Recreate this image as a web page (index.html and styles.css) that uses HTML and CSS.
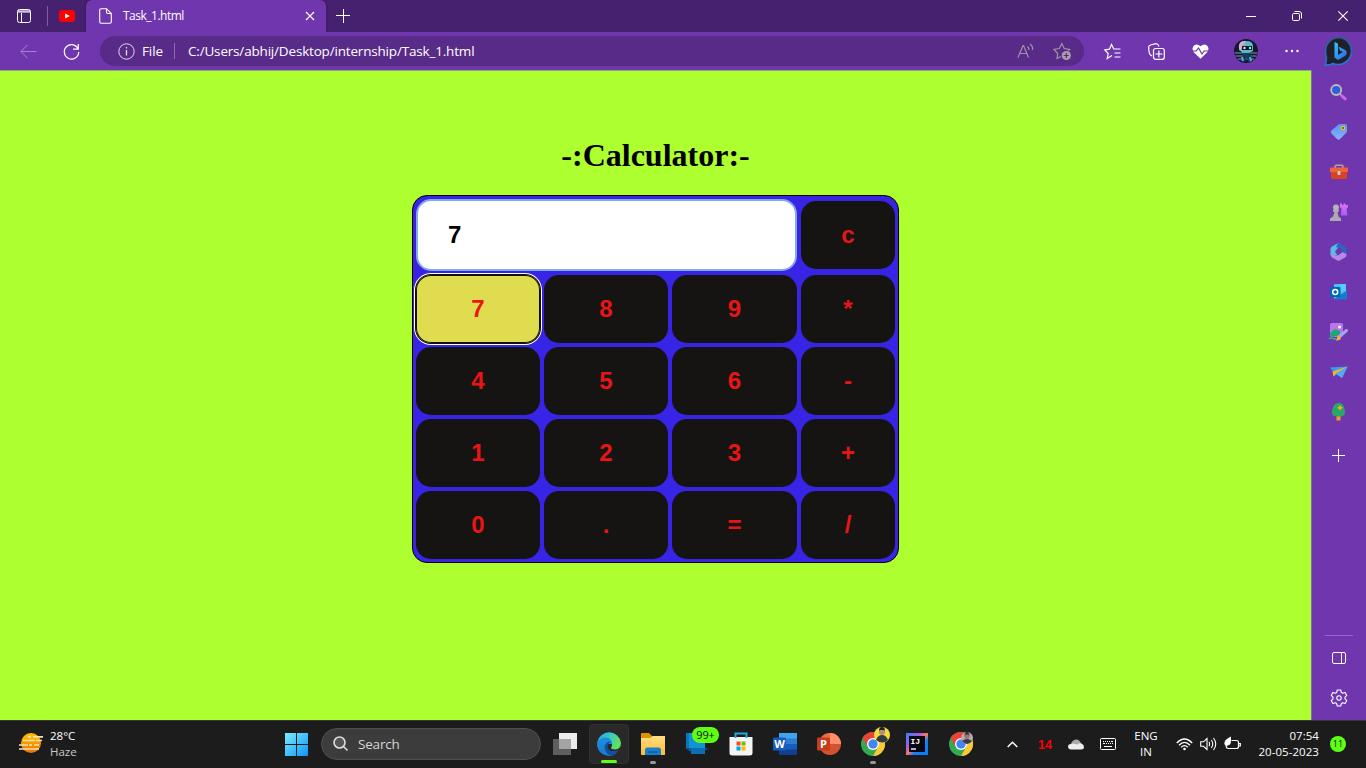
FILE: index.html
```html
<!DOCTYPE html>
<html lang="en">
<head>
<meta charset="utf-8">
<title>Task_1.html</title>
<link rel="stylesheet" href="styles.css">
</head>
<body>
<svg class="defs" width="0" height="0">
  <defs>
    <linearGradient id="sun" x1="0" y1="0" x2="0" y2="1"><stop offset="0" stop-color="#ffc400"/><stop offset="1" stop-color="#f07000"/></linearGradient>
    <linearGradient id="win" x1="0" y1="0" x2="1" y2="1"><stop offset="0" stop-color="#7cecff"/><stop offset="1" stop-color="#0a96f5"/></linearGradient>
    <linearGradient id="edgeTop" x1="0" y1="0" x2="1" y2="0.3"><stop offset="0" stop-color="#2aa5e0"/><stop offset=".5" stop-color="#35c5cf"/><stop offset="1" stop-color="#62e05c"/></linearGradient>
    <linearGradient id="edgeLow" x1="0" y1="0" x2="0" y2="1"><stop offset="0" stop-color="#1b8fe0"/><stop offset="1" stop-color="#1b7ad0"/></linearGradient>
    <linearGradient id="folder" x1="0" y1="0" x2="0" y2="1"><stop offset="0" stop-color="#ffe083"/><stop offset="1" stop-color="#ffb92e"/></linearGradient>
    <linearGradient id="bing" x1="0" y1="0" x2="1" y2="1"><stop offset="0" stop-color="#35c8f5"/><stop offset="1" stop-color="#2563ec"/></linearGradient>
    <linearGradient id="bingEdge" x1="0" y1="0" x2="0" y2="1"><stop offset="0" stop-color="#2a5f8c"/><stop offset="1" stop-color="#2277e0"/></linearGradient>
    <linearGradient id="tagc" x1="0" y1="0" x2="0" y2="1"><stop offset="0" stop-color="#5a98f5"/><stop offset="1" stop-color="#8ab0ff"/></linearGradient>
    <linearGradient id="rook" x1="0" y1="0" x2="0" y2="1"><stop offset="0" stop-color="#e070ff"/><stop offset="1" stop-color="#a85cf4"/></linearGradient>
    <linearGradient id="ij" x1="0" y1="0" x2="1" y2="1"><stop offset="0" stop-color="#2885fa"/><stop offset=".35" stop-color="#b05ae0"/><stop offset=".5" stop-color="#fc7b58"/><stop offset=".65" stop-color="#147ef8"/><stop offset="1" stop-color="#087cfa"/></linearGradient>
    <symbol id="chrome" viewBox="0 0 24 24">
      <circle cx="12" cy="12" r="12" fill="#35a853"/>
      <path d="M1.6 6A12 12 0 0 1 22.4 6L12 6.5L6.8 15Z" fill="#ea4335"/>
      <path d="M22.4 6A12 12 0 0 1 12 24L17.2 15L12 6Z" fill="#fcc934"/>
      <circle cx="12" cy="12" r="6" fill="#fff"/><circle cx="12" cy="12" r="4.7" fill="#4285f4"/>
    </symbol>
  </defs>
</svg>
<div class="screen">
  <header class="tabbar">
    <div class="cell pinned-menu"><svg width="14" height="14" viewBox="0 0 14 14" fill="none" stroke="#fff"><rect x=".5" y=".5" width="13" height="13" rx="2"/><path d="M1 2h12M1 3h12M4.5 4v9"/></svg></div>
    <i class="tab-divider"></i>
    <div class="cell youtube"><svg width="16" height="12" viewBox="0 0 16 12"><rect width="16" height="12" rx="3" fill="#f00"/><path d="M6.2 3.5v5L10.8 6z" fill="#fff"/></svg></div>
    <div class="tab">
      <svg width="13" height="16" viewBox="0 0 13 16" fill="none" stroke="#fff" stroke-width="1.1"><path d="M2 .7h5.5l4.800 4.800v8.300q0 1.500-1.500 1.500H2Q.7 15.300.7 13.800V2Q.7.7 2 .7ZM7.500.7v3.600q0 1.200 1.200 1.200h3.600"/></svg>
      <span class="tab-title">Task_1.html</span>
      <svg width="10" height="10" viewBox="0 0 10 10" fill="none" stroke="#fff" stroke-width="1.2"><path d="M1 1l8 8M9 1L1 9"/></svg>
    </div>
    <div class="cell new-tab"><svg width="14" height="14" viewBox="0 0 14 14" stroke="#fff"><path d="M7.500 0v14M0 6.500h14"/></svg></div>
    <div class="window-buttons">
      <div class="cell"><svg width="10" height="10" viewBox="0 0 10 10" stroke="#fff"><path d="M0 5.500h10"/></svg></div>
      <div class="cell"><svg width="10" height="10" viewBox="0 0 10 10" fill="none" stroke="#fff"><rect x=".5" y="2.500" width="7" height="7" rx="1.200"/><path d="M2.500.5h4.500q2.500 0 2.500 2.500v4.500"/></svg></div>
      <div class="cell"><svg width="10" height="10" viewBox="0 0 10 10" stroke="#fff" stroke-width="1.100"><path d="M.3.3l9.400 9.400M9.700.3L.3 9.700"/></svg></div>
    </div>
  </header>

  <div class="toolbar">
    <div class="cell back"><svg width="17" height="15" viewBox="0 0 17 15" fill="none" stroke="#a883cd"><path d="M16.500 7.500H1M7.500.8L.9 7.500l6.600 6.700"/></svg></div>
    <div class="cell reload"><svg width="17" height="17" viewBox="0 0 17 17" fill="none" stroke="#fff" stroke-width="1.200"><path d="M15.300 6.500A7.200 7.200 0 1 0 15.700 9M15.300 1v5.200h-5.200"/></svg></div>
    <div class="address">
      <svg width="17" height="17" viewBox="0 0 17 17" fill="none" stroke="#e6dcf0"><circle cx="8.500" cy="8.500" r="7.700"/><path d="M8.500 7v5.500M8.500 4v1.500" stroke-width="1.300"/></svg>
      <span class="scheme">File</span><i class="address-divider"></i>
      <span class="url">C:/Users/abhij/Desktop/internship/Task_1.html</span>
      <div class="cell read"><svg width="17" height="16" viewBox="0 0 17 16" fill="none" stroke="#a192a8" stroke-width="1.200"><path d="M1 14.500L6 2.500h.5l5 12M2.700 10.500h7M10.500 3.500q1.700 1.500 1.500 3.500M13 1q3.300 2.500 2.500 6"/></svg></div>
      <div class="cell star-add"><svg width="19" height="19" viewBox="0 0 19 19" fill="none" stroke="#a192a8" stroke-width="1.200"><path d="M8 14.500L4 16.500l.7-5L1 7.500l5.300-1L8.800 1.500l2.500 5 5.300 1-1.500 1.500"/><circle cx="13.300" cy="13.500" r="4.600" fill="#aa9ca8" stroke="none"/><path d="M13.300 11v5M10.800 13.500h5" stroke="#532b7d"/></svg></div>
    </div>
    <div class="cell tool"><svg width="17" height="17" viewBox="0 0 17 17" fill="none" stroke="#fff" stroke-width="1.200"><path d="M8 12.500L3.200 15.500 4.200 10.500.8 7l4.700-.8L7.500 1.500l2.300 4.500h6.700M10.500 10h6M10.500 14h6"/></svg></div>
    <div class="cell tool"><svg width="17" height="17" viewBox="0 0 17 17" fill="none" stroke="#fff" stroke-width="1.200"><rect x="5.500" y="5.500" width="10.800" height="10.800" rx="2"/><path d="M10.900 7.500v7M7.500 11h7M4 13L2.500 12Q1.200 11 1 8L.6 4.500Q.5 2.500 2.500 2L7 .8Q9 .4 10.200 2l.8 1.500"/></svg></div>
    <div class="cell tool"><svg width="17" height="15" viewBox="0 0 17 15"><path d="M8.500 14.800L1.500 8Q-.5 5.500 1 2.800 4-1.500 8.500 2.300 13-1.500 16 2.800 17.500 5.500 15.500 8Z" fill="#fff"/><path d="M-.5 7h4.700l2.300-3 3.500 6 2.200-3h5.300" fill="none" stroke="#63349a" stroke-width="1.200"/></svg></div>
    <div class="cell profile"><svg width="24" height="24" viewBox="0 0 24 24"><circle cx="12" cy="12" r="12" fill="#15182f"/><path d="M.5 14h23M1.500 17h21M4 20h16" stroke="#7b94c0"/><path d="M5 7Q5 2 12 2t7 5v5l-4 2H9l-4-3Z" fill="#5cb9c4"/><path d="M5 10Q4 1 12 2l-3 4-2 5z" fill="#e0a8ca"/><path d="M8 7h10v4H8z" fill="#071721"/><circle cx="10.500" cy="9" r="1.200" fill="#ddf"/><circle cx="16" cy="9" r="1.200" fill="#7ff"/><path d="M9 14h7l2 4-2 1 1 4h-3l-1-4h-1l-1 4-4-1 1-4z" fill="#163c5c"/><path d="M8 18l1 4M16 18l1 4" stroke="#4bb4e0" stroke-width="2"/></svg></div>
    <div class="cell dots"><svg width="14" height="4"><circle cx="1.500" cy="2" r="1.200" fill="#fff"/><circle cx="7" cy="2" r="1.200" fill="#fff"/><circle cx="12.500" cy="2" r="1.200" fill="#fff"/></svg></div>
    <div class="cell bing"><svg width="30" height="31" viewBox="0 0 30 31"><path d="M15 1.500A13.500 13.500 0 1 1 9 27.500Q5 29.500 1.500 29L2.500 22Q1.500 19 1.500 15A13.500 13.500 0 0 1 15 1.500Z" fill="#20202b" stroke="url(#bingEdge)" stroke-width="1.600"/><path d="M10.500 6l3.500 1.500v11.500l5-3-3-1.500-1.500-4 7.500 4q2 3-1 5.500L14 24l-3.500-2.500Z" fill="url(#bing)"/></svg></div>
  </div>

  <div class="workspace">
    <main class="page">
      <h1 class="heading">-:Calculator:-</h1>
      <div class="calculator">
        <div class="display">7</div><div class="key">c</div>
        <div class="key key-focus">7</div><div class="key">8</div><div class="key">9</div><div class="key">*</div>
        <div class="key">4</div><div class="key">5</div><div class="key">6</div><div class="key">-</div>
        <div class="key">1</div><div class="key">2</div><div class="key">3</div><div class="key">+</div>
        <div class="key">0</div><div class="key">.</div><div class="key">=</div><div class="key">/</div>
      </div>
    </main>
    <aside class="sidebar">
      <div class="cell side"><svg width="17" height="17" viewBox="0 0 17 17"><path d="M10 10l2 2" stroke="#aaa" stroke-width="2"/><path d="M11.800 11.800l3.400 3" stroke="#cb65ea" stroke-width="3" stroke-linecap="round"/><circle cx="6.200" cy="6" r="5" fill="#345ddc" stroke="#bcbcbc" stroke-width="1.800"/></svg></div>
      <div class="cell side"><svg width="18" height="18" viewBox="0 0 18 18"><path d="M10 1h5q2 0 2 2v5q0 1-1 2l-6 6q-1.500 1.500-3 0l-5.500-5.500Q0 9 1.500 7.500L8 2Q9 1 10 1Z" fill="url(#tagc)"/><circle cx="13" cy="5" r="1.700" fill="#554" stroke="#efc500" stroke-width="1.300"/></svg></div>
      <div class="cell side"><svg width="18" height="16" viewBox="0 0 18 16"><path d="M5 4V2.500Q5 1.300 6.500 1.300h5Q13 1.300 13 2.500V4" fill="none" stroke="#aaa" stroke-width="1.500"/><rect y="3.500" width="18" height="5" rx="1" fill="#f26335"/><path d="M1 8.500h16v5q0 1.500-1.500 1.500h-13Q1 15 1 13.500Z" fill="#d94320"/><rect x="7.500" y="7" width="3" height="4" rx="1" fill="#ccc"/></svg></div>
      <div class="cell side"><svg width="18" height="18" viewBox="0 0 18 18"><path d="M10 .5h2V2h1.500V.5h2V2H18V4.500l-1.500 1 1 7H11L11.500 5.500 10 4.500Z" fill="url(#rook)"/><circle cx="6" cy="4.500" r="3" fill="#b5b5b8"/><path d="M3 7h6v1.500L7.500 9l1 4.500 2.500 2V18H0v-2.500l3-2L4.500 9 3 8.500Z" fill="#aaaab0"/></svg></div>
      <div class="cell side"><svg width="17" height="18" viewBox="0 0 17 18"><path d="M7.500.5Q8.500 0 9.500.5L11 1.500 7 6v6L2 14Q.5 13 .5 11V6Q.5 4.500 2 3.500Z" fill="#54bfe2"/><path d="M8 .3h1l6 3.400q1.500 1 1.500 2.500v5L12 9V6L6 4Z" fill="#2667c4"/><path d="M.7 10.500L6 13l6-4 4.500 2v1q0 1.500-1.500 2.500L9.500 17.500q-1 .5-2 0L2 14.500Q.7 13 .7 10.500Z" fill="#b48ae4"/><path d="M5 9l3 3.500 4-3v-3L9 5 6 7z" fill="#7036ae"/></svg></div>
      <div class="cell side"><svg width="17" height="16" viewBox="0 0 17 16"><rect x="4" width="12" height="15" rx="1" fill="#53baf4"/><path d="M10 0h6v7h-6z" fill="#50d0f8"/><path d="M3 15.500l14-9v9z" fill="#157bd0"/><rect y="3" width="10.500" height="10" rx="1" fill="#0065b6"/><circle cx="5.200" cy="8" r="2.500" fill="none" stroke="#fff" stroke-width="1.500"/></svg></div>
      <div class="cell side"><svg width="19" height="18" viewBox="0 0 19 18"><rect x="1" width="13" height="14" rx="2" fill="#b875ed"/><circle cx="10.500" cy="4" r="1.500" fill="#fff"/><path d="M1 10l5-4 5 2v4L3 14Q1 13 1 11Z" fill="#22a66f"/><path d="M17.500 7.500l-7 6" stroke="#a6a4f1" stroke-width="3" stroke-linecap="round"/><path d="M0 15.500q3-1 4 0t3 0" fill="none" stroke="#20b894" stroke-width="1.600"/><path d="M9 12.500l3 2.500q-1 3-5 2.500z" fill="#f3b827"/></svg></div>
      <div class="cell side"><svg width="18" height="12" viewBox="0 0 18 12"><path d="M0 1.500l17.500-1L12 12 7 8.500 3 10.500V5.500Z" fill="#369ef0"/><path d="M2.500 5.500L17.500.5 6 7.500l-2.500 3Z" fill="#f6b529"/><path d="M17.500.5L6 7.500l6 4.500z" fill="#55a9f0"/></svg></div>
      <div class="cell side"><svg width="15" height="18" viewBox="0 0 15 18"><path d="M5.500 13h4v3.500q0 1-1 1h-3z" fill="#f49a16"/><path d="M7.500 0Q12 0 13 4q3 9-3 9.500H5Q-1 13 1.500 6 3 0 7.500 0Z" fill="#28a76b"/><path d="M9 1.800l1 2 2 1-2 1-1 2-1-2-2-1 2-1z" fill="#f6b70d"/></svg></div>
      <div class="cell side side-plus"><svg width="13" height="13" viewBox="0 0 13 13" stroke="#fff"><path d="M6.500 0v13M0 6.500h13"/></svg></div>
      <i class="side-divider"></i>
      <div class="cell side side-low"><svg width="14" height="12" viewBox="0 0 14 12" fill="none" stroke="#fff"><rect x=".5" y=".5" width="13" height="11" rx="1.500"/><path d="M9.500.5v11"/></svg></div>
      <div class="cell side side-low"><svg width="18" height="18" viewBox="0 0 18 18" fill="none" stroke="#fff" stroke-width="1.100"><path d="M7.300 1h3.400l.7 2.500 1.200.7 2.500-.8 1.700 3-1.800 1.800v1.600l1.800 1.800-1.700 3-2.500-.8-1.200.7-.7 2.500H7.300l-.7-2.500-1.200-.7-2.500.8-1.700-3L3 9.800V8.200L1.200 6.400l1.700-3 2.500.8 1.200-.7Z" stroke-linejoin="round"/><circle cx="9" cy="9" r="2.200"/></svg></div>
    </aside>
  </div>

  <footer class="taskbar">
    <div class="weather">
      <svg width="24" height="20" viewBox="0 0 24 20"><circle cx="12" cy="10" r="10" fill="url(#sun)"/><path d="M9 3.800h3M14 3.800h10M4 7.500h12M17 7.500h6M0 12h9M10 12h3M15 12h5M0 16h20" stroke="#f6e2b4" stroke-width="1.700"/></svg>
      <div class="weather-text"><span class="degrees">28°C</span><span class="haze">Haze</span></div>
    </div>
    <div class="cell app start"><svg width="23" height="23" viewBox="0 0 23 23"><path d="M0 0h11v11H0zM12 0h11v11H12zM0 12h11v11H0zM12 12h11v11H12z" fill="url(#win)"/></svg></div>
    <div class="search"><svg width="16" height="16" viewBox="0 0 16 16" fill="#555" stroke="#ddd" stroke-width="1.600"><circle cx="6.500" cy="6.500" r="5.500"/><path d="M10.500 10.500l4 4"/></svg><span>Search</span></div>
    <div class="cell app"><svg width="24" height="22" viewBox="0 0 24 22"><path d="M6 0h18v16H6z" fill="#ececec"/><path d="M0 6h18v16H0z" fill="#5e5e5e"/><path d="M6 6h12v10H6z" fill="#a4a4a4"/></svg></div>
    <div class="cell app app-active"><svg width="24" height="24" viewBox="0 0 24 24"><path d="M.3 10A12 12 0 0 1 24 11Q24 17 18 17.500 14 17.500 14 15.800 15.500 14 15 11.500L8 9Z" fill="url(#edgeTop)"/><path d="M.2 10Q3 5.500 8.500 5.500 15 6 15.200 12L9 12Q9 22 21 18.500 17 24 12 24A12 12 0 0 1 .2 10Z" fill="url(#edgeLow)"/><path d="M11.500 9.500Q5.500 13 8.500 19 11 23.500 14.500 23.700 19 22.500 21.500 18.500 13 21 10.700 16 10 12 13.500 10Z" fill="#124f9c"/></svg><i class="run run-active"></i></div>
    <div class="cell app"><svg width="24" height="22" viewBox="0 0 24 22"><path d="M0 1q0-1 1-1h7l3 3h12v6H0z" fill="#dc9300"/><path d="M0 5h9l3-2h12v19H0Z" fill="url(#folder)"/><path d="M4 22v-5q0-2.500 2.500-2.500h11q2.500 0 2.500 2.500v5Z" fill="#1680cf"/><path d="M7 19h10" stroke="#0a60a2" stroke-width="1.500"/></svg><i class="run"></i></div>
    <div class="cell app"><svg width="24" height="22" viewBox="0 0 24 22"><path d="M1 0h10v16H1z" fill="#0878bb"/><path d="M4 0h16v18H4z" fill="#1490d4"/><path d="M0 14l4 1h16l4 1-6 2H5z" fill="#0b5995"/><path d="M6 15h14v6H6z" fill="#0c6fb4"/></svg><span class="badge">99+</span></div>
    <div class="cell app"><svg width="24" height="24" viewBox="0 0 24 24"><path d="M.5 5h23v16q0 2.500-3 2.500h-17q-3 0-3-2.500Z" fill="#f5f5f5"/><path d="M6.500 6V1.500h11V6" fill="none" stroke="#20a8e8" stroke-width="2"/><path d="M7.500 9.500h4v4h-4z" fill="#f25022"/><path d="M12.500 9.500h4v4h-4z" fill="#7fba00"/><path d="M7.500 14.500h4v4h-4z" fill="#00a4ef"/><path d="M12.500 14.500h4v4h-4z" fill="#ffb900"/></svg></div>
    <div class="cell app"><svg width="24" height="22" viewBox="0 0 24 22"><path d="M6 0h18v6H6z" fill="#41a5ee"/><path d="M6 5.500h18v6H6z" fill="#2b7cd3"/><path d="M6 11h18v6H6z" fill="#185abd"/><path d="M6 16.500h18V22H6z" fill="#103f91"/><rect y="4.500" width="13" height="13" rx="1" fill="#185abd"/><text class="office-letter" x="6.500" y="15" text-anchor="middle">W</text></svg></div>
    <div class="cell app"><svg width="24" height="22" viewBox="0 0 24 22"><circle cx="13" cy="11" r="11" fill="#d35230"/><path d="M13 0a11 11 0 0 1 11 11H13z" fill="#ff8f6b"/><path d="M13 0v11H2A11 11 0 0 1 13 0Z" fill="#ed6c47"/><rect y="4.500" width="13" height="13" rx="1" fill="#c43e1c"/><text class="office-letter" x="6.500" y="15" text-anchor="middle">P</text></svg></div>
    <div class="cell app"><svg width="30" height="30" viewBox="0 0 30 30"><use href="#chrome" x="3" y="3" width="24" height="24"/><g transform="translate(15 -3)"><circle cx="9" cy="9" r="8" fill="#f3db38"/><circle cx="9" cy="6" r="3" fill="#ba8c78"/><path d="M6 5q0-4 3-4t3 4L11 4H7z" fill="#172229"/><path d="M3 14q2-5 6-5t6 5q-5 5-12 0" fill="#303a42"/></g></svg><i class="run"></i></div>
    <div class="cell app"><svg width="22" height="22" viewBox="0 0 22 22"><rect width="22" height="22" fill="url(#ij)"/><path d="M3 3h16v16H3z" fill="#080713"/><text class="ij-letter" x="4.500" y="11">IJ</text><path d="M5 16h5" stroke="#eee" stroke-width="1.500"/></svg></div>
    <div class="cell app"><svg width="30" height="30" viewBox="0 0 30 30"><use href="#chrome" x="3" y="3" width="24" height="24"/><circle cx="21" cy="9" r="6" fill="#b6a8af"/><circle cx="21" cy="7.500" r="2.500" fill="#9e756c"/><path d="M18.500 7q0-4 2.500-4t2.500 4l-1-1.500h-3z" fill="#252c36"/><path d="M16 12q5-4 10 0-5 6-10 0" fill="#343d49"/></svg></div>
    <div class="cell chevron"><svg width="11" height="7" viewBox="0 0 11 7" fill="none" stroke="#fff" stroke-width="1.500"><path d="M.7 6l4.800-4.800L10.300 6"/></svg></div>
    <div class="cell temperature">14</div>
    <div class="cell cloud"><svg width="16" height="11" viewBox="0 0 16 11"><path d="M3 5Q4 1 8 .5q4 0 5 4.500v4H2z" fill="#aaa"/><path d="M3 10.500Q0 10 0 7.500T3 5q2-1 4 0l3 .5q1-2 3.500-1T16 8q0 2.500-3 2.500Z" fill="#eee"/></svg></div>
    <div class="cell keyboard"><svg width="16" height="12" viewBox="0 0 16 12" fill="none" stroke="#fff"><rect x=".5" y=".5" width="15" height="11" rx="1"/><path d="M3 3.500h1m1 0h1m1 0h1m1 0h1m1 0h2M3 5.500h2m1 0h1m1 0h1m1 0h1m1 0h1M4 8.500h8"/></svg></div>
    <div class="language"><span>ENG</span><span>IN</span></div>
    <div class="cell status"><svg width="17" height="13" viewBox="0 0 17 13" fill="none" stroke="#fff" stroke-width="1.300"><path d="M.8 5Q8.500-3 16.200 5M3 7.200Q8.500 1.500 14 7.200M5.200 9.300Q8.500 6 11.800 9.300"/><circle cx="8.500" cy="11" r="1.300" fill="#fff" stroke="none"/></svg></div>
    <div class="cell status"><svg width="17" height="14" viewBox="0 0 17 14" fill="none" stroke="#fff" stroke-width="1.100"><path d="M.7 4.800h2.800L7 1.500v11L3.500 9.300H.7ZM9 4.800q1.500 2.200 0 4.400M11.300 3q3 4 0 8M13.500 1q4.500 6 0 12"/></svg></div>
    <div class="cell status"><svg width="17" height="14" viewBox="0 0 17 14" fill="none" stroke="#fff" stroke-width="1.200"><path d="M7.500 3.500h5q2 0 2 2v4q0 2-2 2h-8q-2 0-2-1.500M15 6.500h1.300v2.500H15"/><path d="M7-.5v4.500q0 4-3.500 4.500L2 11 1.500 8.500Q-.5 7 1 4 2 2 7-.5Z" fill="#fff" stroke="none"/></svg></div>
    <div class="clock"><span>07:54</span><span>20-05-2023</span></div>
    <span class="notification">11</span>
  </footer>
</div>
</body>
</html>
```

FILE: styles.css
```css
* { box-sizing: border-box; }
body { margin: 0; overflow: hidden; font-family: "Open Sans", "Noto Sans", sans-serif; color: #fff; }
.defs { position: absolute; }
svg { display: block; flex: none; overflow: visible; }
.screen { display: flex; flex-direction: column; width: 1366px; height: 768px; }
.cell { display: flex; align-items: center; justify-content: center; flex: none; }

.tabbar { display: flex; height: 32px; background: #462170; align-items: stretch; }
.pinned-menu { width: 47px; }
.tab-divider { width: 1px; height: 20px; margin-top: 6px; background: #7c619a; }
.youtube { width: 38px; }
.tab { display: flex; align-items: center; width: 240px; padding: 0 11px 0 13px; background: #7036ae; border-radius: 6px 6px 0 0; box-shadow: 0 0 3px #2e144c; }
.tab-title { flex: 1; margin-left: 11px; padding-bottom: 2px; font-size: 12px; letter-spacing: -0.5px; }
.new-tab { width: 34px; }
.window-buttons { display: flex; margin-left: auto; }
.window-buttons .cell { width: 46px; }

.toolbar { position: relative; display: flex; align-items: center; height: 38px; background: #7036ae; }
.back { width: 54px; padding-left: 2px; }
.reload { width: 35px; }
.address { display: flex; align-items: center; width: 984px; height: 30px; margin: 0 6px 0 11px; padding-left: 18px; border-radius: 15px; background: #582b89; font-size: 13.5px; }
.scheme { width: 32px; margin-left: 7px; letter-spacing: -0.1px; }
.address-divider { width: 1px; height: 16px; background: #8c6eae; }
.url { flex: 1; margin-left: 13px; letter-spacing: -0.18px; white-space: nowrap; }
.read { width: 36px; }
.star-add { width: 39px; margin-right: 2px; }
.tool { width: 44px; }
.profile { width: 47px; }
.dots { width: 46px; }
.bing { width: 48px; }

.workspace { display: flex; height: 650px; }
.page { display: flex; flex-direction: column; align-items: center; width: 1311px; background: #adff2f; border-top: 1px solid #8fa878; }
.heading { height: 37px; margin: 66px 0 21px; color: #000; font: bold 32px/37px "Liberation Serif", "Times New Roman", serif; }
.calculator { display: grid; grid-template-columns: 124px 124px 125px 94px; grid-template-rows: 72px repeat(4, 68px); gap: 4px; padding: 3px; border: 1px solid #000; border-radius: 15px; background: #3724e4; font: bold 24px/28px "Liberation Sans", Arial, sans-serif; }
.display { display: flex; align-items: center; grid-column: span 3; padding-left: 30px; border: 2px solid #85a9e8; border-radius: 15px; background: #fff; color: #000; }
.key { display: flex; align-items: center; justify-content: center; align-self: center; height: 68px; border-radius: 15px; background: #161412; color: #e91515; }
.key-focus { background: #e0dc50; box-shadow: inset 0 0 0 1px #101010, 0 0 0 1px #101010, 0 0 0 2px #fff; }

.sidebar { display: flex; flex-direction: column; align-items: center; width: 55px; border-left: 1px solid #8c62bb; background: #7036ae; padding: 2px 1px 0 0; }
.side { width: 40px; height: 40px; }
.side-plus { margin-top: 3px; }
.side-divider { width: 28px; height: 1px; margin: auto 0 2px; background: #9566c8; }
.side-low { padding-left: 1px; }
.sidebar .side:last-child { margin-bottom: 2px; }

.taskbar { display: flex; align-items: center; height: 48px; padding-bottom: 1px; background: #1c1c1c; border-top: 1px solid #383838; font-size: 11px; }
.weather { display: flex; align-items: center; width: 274px; padding-left: 19px; }
.weather svg { margin-top: -2px; }
.weather-text { display: flex; flex-direction: column; margin-left: 7px; line-height: 16px; }
.degrees { font-size: 11.5px; }
.haze { color: #c9c9c9; font-size: 11.5px; }
.app { position: relative; width: 44px; height: 40px; }
.search { display: flex; align-items: center; flex: none; width: 220px; height: 32px; margin: 0 2px 0 3px; padding-left: 11px; gap: 9px; border: 1px solid #505050; border-radius: 16px; background: #3c3c3c; color: #d6d6d6; font-size: 13.5px; letter-spacing: -0.2px; }
.app-active { width: 40px; margin: 0 2px; border: 1px solid #313131; border-radius: 4px; background: #292929; }
.run { position: absolute; bottom: 0; left: 19px; width: 6px; height: 3px; border-radius: 2px; background: #999; }
.run-active { bottom: 0; left: 11px; width: 16px; background: #5eff12; }
.badge { position: absolute; top: 3px; left: 17px; width: 27px; height: 16px; border-radius: 8px; background: #5eff12; color: #111; font-size: 11px; line-height: 16px; text-align: center; letter-spacing: -0.2px; }
.office-letter { fill: #fff; font: bold 11px "Open Sans", sans-serif; }
.ij-letter { fill: #fff; font: bold 8px "Liberation Mono", monospace; }
.chevron { width: 32px; margin-left: 13px; }
.temperature { width: 34px; padding-top: 2px; color: #f00; font: bold 12.5px "Liberation Sans", Arial, sans-serif; }
.cloud { width: 28px; }
.keyboard { width: 36px; }
.language { display: flex; flex-direction: column; width: 40px; margin-right: 6px; text-align: center; line-height: 16px; font-size: 11.5px; }
.status { width: 24px; }
.clock { display: flex; flex-direction: column; width: 75px; text-align: right; line-height: 16px; font-size: 11.5px; letter-spacing: 0.05px; }
.notification { width: 16px; height: 16px; margin-left: 11px; border-radius: 50%; background: #5eff12; color: #111; font-size: 9px; line-height: 16px; text-align: center; }
```
